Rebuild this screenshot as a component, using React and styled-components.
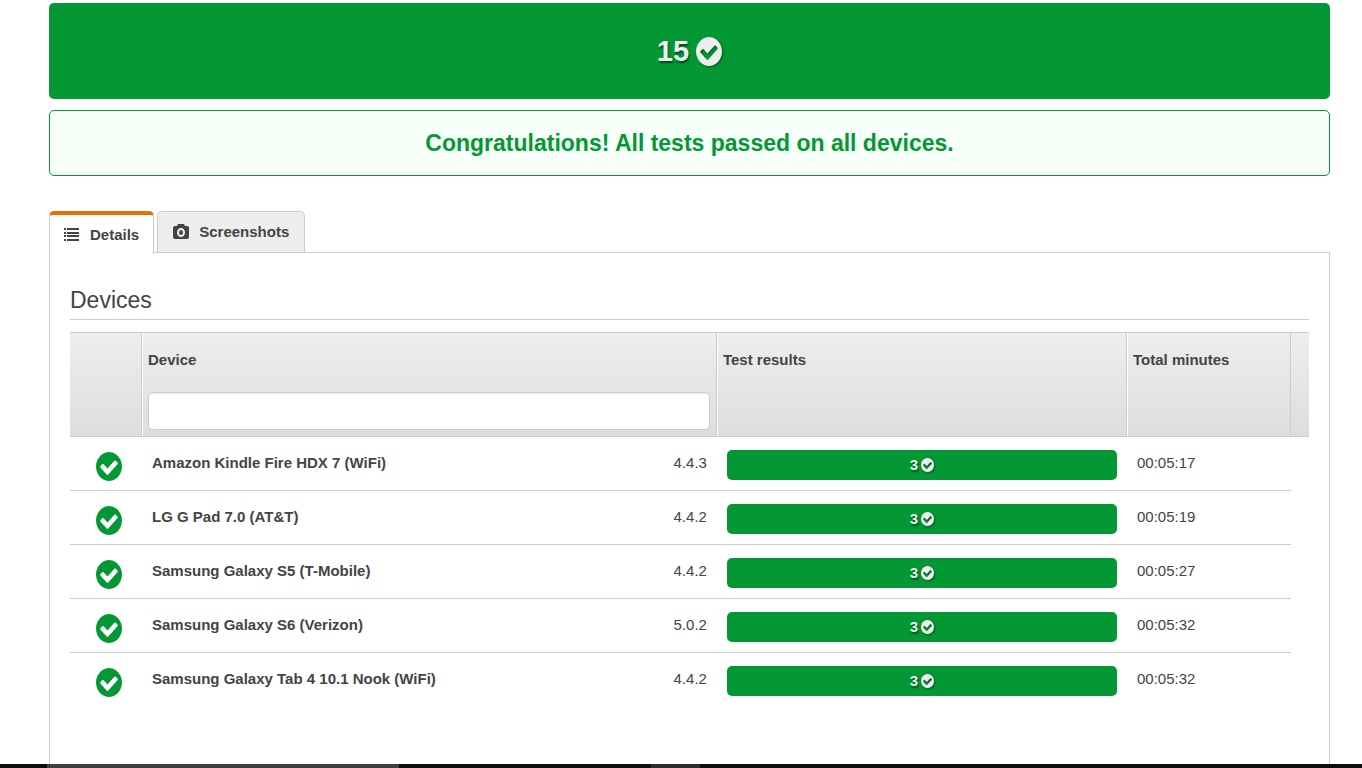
import React from "react";
import styled, { createGlobalStyle } from "styled-components";

const green = "#039833";
const line = "#cccccc";

const GlobalStyle = createGlobalStyle`
  * { box-sizing: border-box; }
  body {
    margin: 0;
    background: #ffffff;
    color: #444444;
    font-family: "Liberation Sans", Arial, sans-serif;
    font-size: 15px;
    line-height: 24px;
  }
`;

const Page = styled.div`
  min-height: 100vh;
  display: flex;
  flex-direction: column;
`;

const Main = styled.main`
  flex: 1;
  display: flex;
  flex-direction: column;
  padding: 3px 32px 0 49px;
`;

const ResultBar = styled.div`
  display: flex;
  align-items: center;
  justify-content: center;
  gap: ${(p) => (p.$large ? 7 : 3)}px;
  height: ${(p) => (p.$large ? 96 : 30)}px;
  border-radius: 5px;
  background: ${green};
  color: #eeeeee;
  font-size: ${(p) => (p.$large ? 29 : 15)}px;
  font-weight: bold;
  text-shadow: 1px 2px 2px rgba(0, 0, 0, 0.5);
`;

const Message = styled.p`
  display: flex;
  align-items: center;
  justify-content: center;
  height: 66px;
  margin: 11px 0 35px;
  border: 1px solid ${green};
  border-radius: 5px;
  background: #f7fff9;
  color: ${green};
  font-size: 23px;
  font-weight: bold;
`;

const Tabs = styled.div`
  display: flex;
  align-items: flex-start;
  gap: 3px;
  height: 41px;
`;

const Tab = styled.button`
  display: flex;
  align-items: center;
  gap: 10px;
  height: ${(p) => (p.$active ? 43 : 41)}px;
  padding: 0 ${(p) => (p.$active ? 14 : 15)}px;
  border: 1px solid ${line};
  border-top: ${(p) => (p.$active ? "4px solid #e57200" : `1px solid ${line}`)};
  border-bottom: 0;
  border-radius: 5px 5px 0 0;
  background: ${(p) => (p.$active ? "#ffffff" : "#eeeeee")};
  color: #444444;
  font: inherit;
  font-weight: bold;
  z-index: 1;
`;

const Panel = styled.section`
  flex: 1;
  padding: 32px 20px 0;
  border: 1px solid ${line};
  border-bottom: 0;
`;

const Title = styled.h2`
  margin: 0 0 12px;
  padding-bottom: 4px;
  border-bottom: 1px solid ${line};
  font-size: 23px;
  line-height: 30px;
  font-weight: normal;
`;

const Table = styled.table`
  width: 100%;
  table-layout: fixed;
  border-collapse: separate;
  border-spacing: 0;
`;

const Col = styled.col`
  width: ${(p) => p.$width};
`;

const HeadRow = styled.tr`
  height: 105px;
  background: linear-gradient(#eeeeee, #dddddd);
`;

const Head = styled.th`
  padding: 15px 6px 0;
  border-top: 1px solid ${line};
  border-bottom: 1px solid ${line};
  border-right: ${(p) => (p.$end ? 0 : 1)}px solid ${line};
  box-shadow: ${(p) => (p.$lit ? "inset 1px 0 #ffffff" : "none")};
  text-align: left;
  vertical-align: top;
`;

const Filter = styled.input`
  display: block;
  width: 100%;
  height: 38px;
  margin-top: 20px;
  padding: 0 8px;
  border: 1px solid ${line};
  border-radius: 5px;
  background: #ffffff;
  box-shadow: inset 0 1px 1px rgba(0, 0, 0, 0.08);
  font: inherit;
`;

const Row = styled.tr`
  height: 54px;
  &:not(:last-child) td:not(:last-child) {
    border-bottom: 1px solid ${line};
  }
`;

const Cell = styled.td`
  padding: ${(p) => p.$pad || "14px 10px 0"};
  vertical-align: top;
`;

const DeviceLine = styled.div`
  display: flex;
  justify-content: space-between;
`;

const Check = styled.svg`
  display: block;
  width: ${(p) => p.$w}px;
  height: ${(p) => p.$h}px;
  filter: ${(p) => (p.$shadow ? "drop-shadow(1px 1px 1px rgba(0, 0, 0, 0.4))" : "none")};
`;

const TabIcon = styled.svg`
  display: block;
  width: 16px;
  height: 16px;
`;

const Taskbar = styled.footer`
  display: flex;
  height: 4px;
  background: #0b0f0f;
`;

const TaskSlot = styled.span`
  width: ${(p) => p.$width};
  margin-left: ${(p) => p.$gap};
  background: ${(p) => p.$color};
`;

function CheckCircle({ w, h, color = "currentColor", shadow, label }) {
  return (
    <Check
      $w={w}
      $h={h}
      $shadow={shadow}
      viewBox="0 0 1536 1536"
      preserveAspectRatio="none"
      fill={color}
      role="img"
      aria-label={label}
    >
      <path d="M1284 606q0-28-18-46l-91-90q-19-19-45-19t-45 19l-408 407-226-226q-19-19-45-19t-45 19l-91 90q-18 18-18 46 0 27 18 45l362 362q19 19 45 19 27 0 46-19l543-543q18-18 18-45zm252 162q0 209-103 385.5t-279.5 279.5-385.5 103-385.5-103-279.5-279.5-103-385.5 103-385.5 279.5-279.5 385.5-103 385.5 103 279.5 279.5 103 385.5z" />
    </Check>
  );
}

const devices = [
  ["Amazon Kindle Fire HDX 7 (WiFi)", "4.4.3", "00:05:17"],
  ["LG G Pad 7.0 (AT&T)", "4.4.2", "00:05:19"],
  ["Samsung Galaxy S5 (T-Mobile)", "4.4.2", "00:05:27"],
  ["Samsung Galaxy S6 (Verizon)", "5.0.2", "00:05:32"],
  ["Samsung Galaxy Tab 4 10.1 Nook (WiFi)", "4.4.2", "00:05:32"],
];

export default function App() {
  return (
    <Page>
      <GlobalStyle />
      <Main>
        <ResultBar $large>
          15
          <CheckCircle w={26} h={29} shadow label="passed" />
        </ResultBar>
        <Message>Congratulations! All tests passed on all devices.</Message>
        <Tabs role="tablist">
          <Tab type="button" role="tab" aria-selected="true" $active>
            <TabIcon viewBox="0 0 16 16" fill="currentColor" aria-hidden="true">
              <path d="M0 1h2v2H0zM3 1h12v2H3zM0 5h2v2H0zM3 5h12v2H3zM0 8h2v2H0zM3 8h12v2H3zM0 12h2v2H0zM3 12h12v2H3z" />
            </TabIcon>
            Details
          </Tab>
          <Tab type="button" role="tab" aria-selected="false">
            <TabIcon viewBox="0 0 16 16" fill="currentColor" aria-hidden="true">
              <path
                fillRule="evenodd"
                d="M5 0h6l1 2h2q2 0 2 2v9q0 2-2 2H2q-2 0-2-2V4q0-2 2-2h2zM8 4a4 4.5 0 1 0 0 9a4 4.5 0 1 0 0-9zM8 6a2 2.5 0 1 1 0 5a2 2.5 0 1 1 0-5z"
              />
            </TabIcon>
            Screenshots
          </Tab>
        </Tabs>
        <Panel>
          <Title>Devices</Title>
          <Table>
            <colgroup>
              <Col $width="72px" />
              <Col />
              <Col $width="33.1%" />
              <Col $width="164px" />
              <Col $width="18px" />
            </colgroup>
            <thead>
              <HeadRow>
                <Head aria-label="Status" />
                <Head $lit>
                  <label htmlFor="device-filter">Device</label>
                  <Filter id="device-filter" type="text" />
                </Head>
                <Head $lit>Test results</Head>
                <Head $lit>Total minutes</Head>
                <Head $end aria-hidden="true" />
              </HeadRow>
            </thead>
            <tbody>
              {devices.map(([name, version, time]) => (
                <Row key={name}>
                  <Cell $pad="15px 0 0 26px">
                    <CheckCircle w={26} h={29} color={green} label="passed" />
                  </Cell>
                  <Cell>
                    <DeviceLine>
                      <strong>{name}</strong>
                      <span>{version}</span>
                    </DeviceLine>
                  </Cell>
                  <Cell $pad="13px 10px 0">
                    <ResultBar>
                      3
                      <CheckCircle w={13} h={14} shadow label="passed" />
                    </ResultBar>
                  </Cell>
                  <Cell>{time}</Cell>
                  <Cell />
                </Row>
              ))}
            </tbody>
          </Table>
        </Panel>
      </Main>
      <Taskbar>
        <TaskSlot $gap="47px" $width="352px" $color="#3c4040" />
        <TaskSlot $gap="252px" $width="49px" $color="#2b2f2f" />
      </Taskbar>
    </Page>
  );
}
